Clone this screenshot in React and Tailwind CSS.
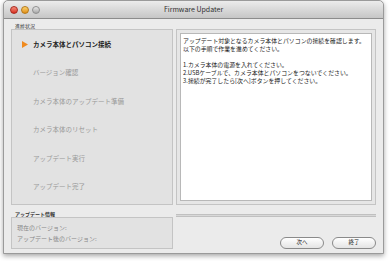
import React from "react";

const steps = [
  "カメラ本体とパソコン接続",
  "バージョン確認",
  "カメラ本体のアップデート準備",
  "カメラ本体のリセット",
  "アップデート実行",
  "アップデート完了",
];

const F = { fontFamily: '"Noto Sans CJK JP", "Noto Sans", sans-serif' };

export default function App() {
  return (
    <div className="w-[390px] h-[261px] bg-white overflow-hidden" style={F}>
      <div className="ml-[3px] w-[381px] h-[254px] rounded-t-[5px] border border-[#9a9a9a] bg-[#ebebeb] shadow-[0_2px_5px_rgba(0,0,0,0.35)] flex flex-col">
        <div className="h-[18px] rounded-t-[5px] bg-gradient-to-b from-[#ececec] to-[#c6c6c6] border-b border-[#8c8c8c] relative flex items-center justify-center">
          <div className="absolute left-[6px] top-[5px] flex gap-[3px]">
            <div className="w-[8px] h-[8px] rounded-full bg-gradient-to-b from-[#f58b7c] to-[#d6271a] border border-[#a82a1f]" />
            <div className="w-[8px] h-[8px] rounded-full bg-gradient-to-b from-[#fbd36a] to-[#e08f0e] border border-[#b5781a]" />
            <div className="w-[8px] h-[8px] rounded-full bg-gradient-to-b from-[#e8e8e8] to-[#a8a8a8] border border-[#8e8e8e]" />
          </div>
          <span className="text-[7px] leading-none text-[#303030]">Firmware Updater</span>
        </div>
        <div className="flex-1 px-[7px] flex flex-col">
          <div className="h-[10px] flex items-end pl-[4px] pb-[1px]">
            <span className="text-[5px] leading-none text-[#333]">進捗状況</span>
          </div>
          <div className="flex gap-[3px] h-[176px]">
            <div className="w-[162px] border border-[#c4c4c4] bg-[#e2e2e2] flex flex-col">
              {steps.map((s, i) => (
                <div key={i} className="h-[28.4px] flex items-center">
                  <div className="w-[21px] flex justify-end pr-[5px]">
                    {i === 0 && (
                      <svg width="6" height="7" viewBox="0 0 6 7">
                        <path d="M0 0 L6 3.5 L0 7 Z" fill="#f08a1e" />
                      </svg>
                    )}
                  </div>
                  <span
                    className={
                      i === 0
                        ? "text-[6.5px] leading-none font-bold text-[#222]"
                        : "text-[6.5px] leading-none text-[#999]"
                    }
                  >
                    {s}
                  </span>
                </div>
              ))}
            </div>
            <div className="flex-1 border border-[#c4c4c4] bg-[#e6e6e6] p-[3px]">
              <div className="h-full bg-white border border-[#b8b8b8] px-[2px] pt-[3px] text-[5.9px] leading-[8px] text-[#222]">
                <div>アップデート対象となるカメラ本体とパソコンの接続を確認します。</div>
                <div>以下の手順で作業を進めてください。</div>
                <div className="h-[8px]" />
                <div>1.カメラ本体の電源を入れてください。</div>
                <div>2.USBケーブルで、カメラ本体とパソコンをつないでください。</div>
                <div>3.接続が完了したら[次へ]ボタンを押してください。</div>
              </div>
            </div>
          </div>
          <div className="flex gap-[3px] flex-1">
            <div className="w-[162px] flex flex-col">
              <div className="h-[12px] flex items-end pl-[4px] pb-[1px]">
                <span className="text-[5px] leading-none font-bold text-[#333]">アップデート情報</span>
              </div>
              <div className="h-[32px] border border-[#c4c4c4] bg-[#e2e2e2] flex flex-col justify-center gap-[5px] pl-[5px] text-[6px] leading-none text-[#888]">
                <div>現在のバージョン:</div>
                <div>アップデート後のバージョン:</div>
              </div>
            </div>
            <div className="flex-1 flex flex-col">
              <div className="mt-[9px] h-[3px] border-t border-b border-[#c0c0c0] bg-[#d8d8d8]" />
              <div className="flex justify-end gap-[8px] mt-[20px] pr-[0px]">
                <button className="w-[44px] h-[12px] rounded-full border border-[#8a8a8a] bg-gradient-to-b from-white to-[#e4e4e4] text-[5.5px] leading-none text-[#222] flex items-center justify-center">
                  次へ
                </button>
                <button className="w-[44px] h-[12px] rounded-full border border-[#8a8a8a] bg-gradient-to-b from-white to-[#e4e4e4] text-[5.5px] leading-none text-[#222] flex items-center justify-center">
                  終了
                </button>
              </div>
            </div>
          </div>
        </div>
      </div>
    </div>
  );
}
